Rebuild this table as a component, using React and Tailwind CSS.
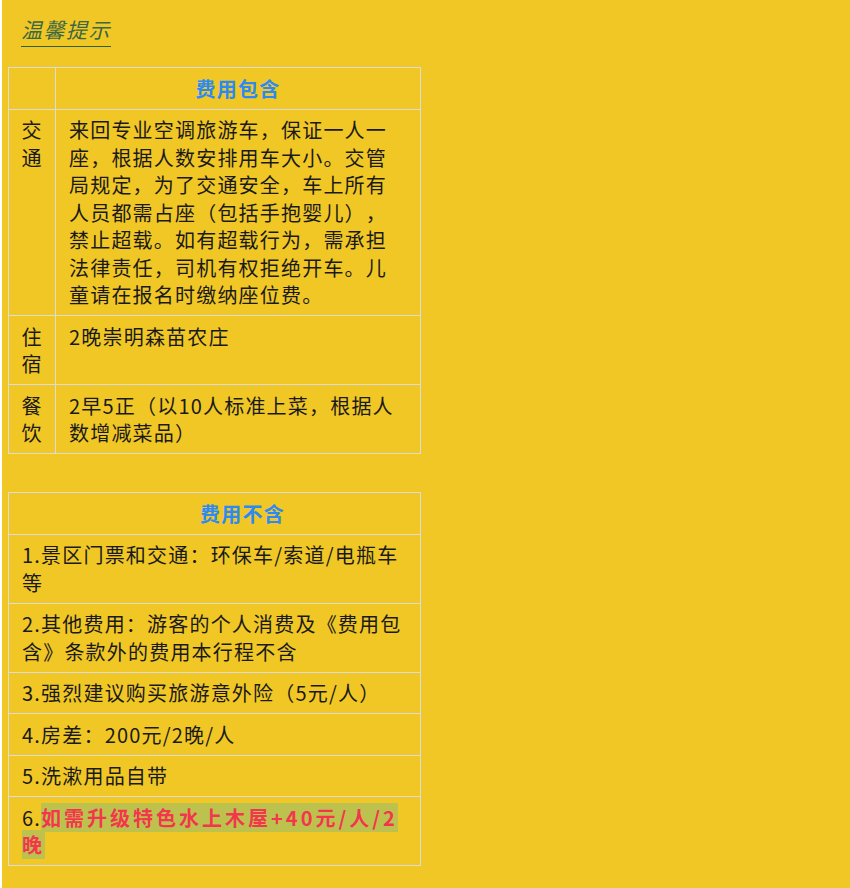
import React from 'react'

const included = [
  {
    label: '交通',
    text: '来回专业空调旅游车，保证一人一座，根据人数安排用车大小。交管局规定，为了交通安全，车上所有人员都需占座（包括手抱婴儿），禁止超载。如有超载行为，需承担法律责任，司机有权拒绝开车。儿童请在报名时缴纳座位费。',
  },
  { label: '住宿', text: '2晚崇明森苗农庄' },
  { label: '餐饮', text: '2早5正（以10人标准上菜，根据人数增减菜品）' },
]

const excluded = [
  '1.景区门票和交通：环保车/索道/电瓶车等',
  '2.其他费用：游客的个人消费及《费用包含》条款外的费用本行程不含',
  '3.强烈建议购买旅游意外险（5元/人）',
  '4.房差：200元/2晚/人',
  '5.洗漱用品自带',
]

const cell = 'border border-[#dcdcdc] px-[13px] py-[6.5px] align-top'
const first = 'border border-[#dcdcdc] w-[47px] px-[12px] py-[6.5px] align-top text-center'

const App = () => {
  return (
    <div className="bg-white pl-[2px] min-h-screen">
      <div
        className="bg-[#f1c725] min-h-screen pt-[16px] px-[6px] pb-[20px] text-[20px] leading-[27.5px] tracking-[1.2px] text-[#1a1a1a] [text-spacing-trim:space-all]"
        style={{ fontFamily: '"Noto Sans CJK SC", "Noto Sans", sans-serif' }}
      >
        <div className="pl-[13px]">
          <span className="inline-block text-[21px] leading-[27px] tracking-[1.5px] italic text-[#3b6845] border-b border-[#2f5f36] pb-[3px]">
            温馨提示
          </span>
        </div>

        <table className="mt-[20px] w-[413px] border-collapse">
          <tbody>
            <tr>
              <td className={first}></td>
              <th className={cell + ' text-center font-bold text-[#2b8af3]'}>费用包含</th>
            </tr>
            {included.map((row) => (
              <tr key={row.label}>
                <td className={first}>{row.label}</td>
                <td className={cell}>{row.text}</td>
              </tr>
            ))}
          </tbody>
        </table>

        <table className="mt-[38px] w-[413px] border-collapse">
          <tbody>
            <tr>
              <th className="border border-[#dcdcdc] pl-[69px] pr-[13px] py-[6.5px] text-center font-bold text-[#2b8af3]">
                费用不含
              </th>
            </tr>
            {excluded.map((t) => (
              <tr key={t}>
                <td className={cell}>{t}</td>
              </tr>
            ))}
            <tr>
              <td className={cell}>
                <span>6.</span>
                <span className="bg-[#bdc24e] text-[#f3364d] font-bold tracking-[3px]">如需升级特色水上木屋+40元/人/2晚</span>
              </td>
            </tr>
          </tbody>
        </table>
      </div>
    </div>
  )
}

export default App
